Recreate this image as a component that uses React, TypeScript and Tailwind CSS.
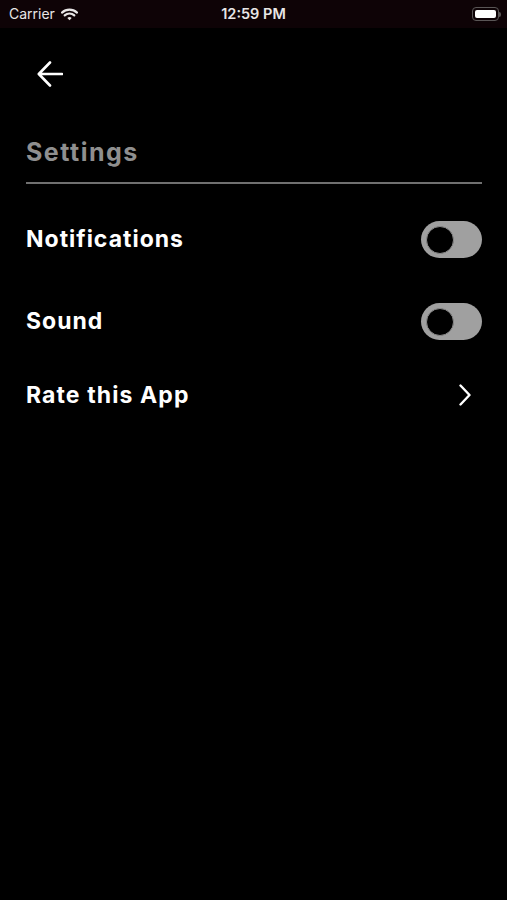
import React, { useState } from 'react';

// Simple iOS-like off switch
const Toggle: React.FC<{ on: boolean; onChange: () => void }> = ({ on, onChange }) => (
  <button
    onClick={onChange}
    className={`flex h-[37px] w-[61px] items-center rounded-full px-[5px] ${
      on ? 'justify-end bg-[#34c759]' : 'justify-start bg-[#a0a0a0]'
    }`}
  >
    <span className="block h-[28px] w-[28px] rounded-full border border-[#8a8a8a] bg-black" />
  </button>
);

const StatusBar: React.FC = () => (
  <div className="relative flex h-[28px] items-center justify-between bg-[#0e0306] pl-[9px] pr-[6px] text-[#e8e6e6] [font-family:Inter,'Liberation_Sans',sans-serif]">
    <div className="flex items-center gap-[6px]">
      <span className="text-[14px] leading-none">Carrier</span>
      <svg width="17" height="13" viewBox="0 0 17 13">
        <path d="M1 4.6 A11 11 0 0 1 16 4.6" fill="none" stroke="#e8e6e6" strokeWidth="2.2" strokeLinecap="round" />
        <path d="M3.7 7.4 A7 7 0 0 1 13.3 7.4" fill="none" stroke="#e8e6e6" strokeWidth="2.2" strokeLinecap="round" />
        <path d="M6.3 10 L8.5 12.3 L10.7 10 A3.2 3.2 0 0 0 6.3 10 Z" fill="#e8e6e6" />
      </svg>
    </div>
    <span className="absolute left-1/2 -translate-x-1/2 text-[14.5px] font-semibold leading-none">12:59 PM</span>
    <div className="flex items-center">
      <div className="h-[14px] w-[27px] rounded-[4px] border border-[#5a5656] p-[2px]">
        <div className="h-full w-full rounded-[2px] bg-white" />
      </div>
      <div className="h-[5px] w-[2px] rounded-r-sm bg-[#5a5656]" />
    </div>
  </div>
);

export default function App() {
  const [notifications, setNotifications] = useState(false);
  const [sound, setSound] = useState(false);

  return (
    <div className="min-h-[900px] bg-black [font-family:Inter,'Liberation_Sans',sans-serif]">
      <StatusBar />

      <div className="pl-[26px] pr-[25px]">
        {/* Back arrow */}
        <button className="mt-[33px] ml-[11px] block h-[26px] w-[26px]">
          <svg width="26" height="26" viewBox="0 0 26 26">
            <path
              d="M25 13H2 M13 1.5 L1.8 13 L13 24.5"
              fill="none"
              stroke="white"
              strokeWidth="2.6"
              strokeLinecap="round"
              strokeLinejoin="round"
            />
          </svg>
        </button>

        {/* Title */}
        <h1 className="mt-[51px] text-[25px] font-bold leading-[28px] tracking-[1.5px] text-[#8f8f8f]">
          Settings
        </h1>
        <div className="mt-[16px] h-[2px] w-full bg-[#707070]" />

        {/* Rows */}
        <div className="mt-[37px] flex h-[37px] items-center justify-between">
          <span className="text-[23px] font-bold tracking-[1px] text-white">Notifications</span>
          <Toggle on={notifications} onChange={() => setNotifications(!notifications)} />
        </div>

        <div className="mt-[45px] flex h-[37px] items-center justify-between">
          <span className="text-[23px] font-bold tracking-[1px] text-white">Sound</span>
          <Toggle on={sound} onChange={() => setSound(!sound)} />
        </div>

        <div className="mt-[41px] flex h-[28px] items-center justify-between">
          <span className="text-[23px] font-bold tracking-[1.1px] text-white">Rate this App</span>
          <svg width="14" height="22" viewBox="0 0 14 22" className="mr-[10px]">
            <path
              d="M2.5 1.5 L11.5 11 L2.5 20.5"
              fill="none"
              stroke="white"
              strokeWidth="2.4"
              strokeLinecap="round"
              strokeLinejoin="round"
            />
          </svg>
        </div>
      </div>
    </div>
  );
}
